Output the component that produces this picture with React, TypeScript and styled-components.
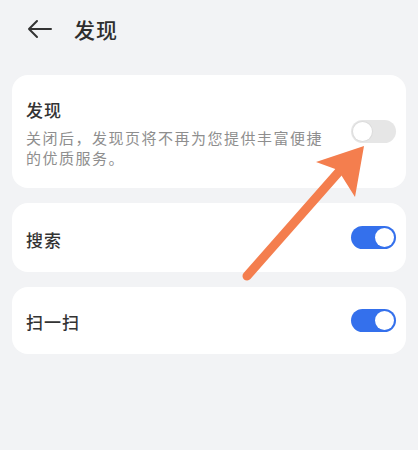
import React from 'react';
import styled, { createGlobalStyle } from 'styled-components';

const GlobalStyle = createGlobalStyle`
  html, body {
    margin: 0;
    padding: 0;
    background: #f2f3f5;
  }
  body {
    font-family: 'Noto Sans CJK SC', 'Noto Sans', sans-serif;
  }
`;

const Page = styled.div`
  position: relative;
  width: 418px;
  height: 450px;
  overflow: hidden;
  background: #f2f3f5;
`;

const Header = styled.div`
  display: flex;
  align-items: center;
  height: 58px;
  padding-left: 27px;
  box-sizing: border-box;
`;

const BackButton = styled.div`
  display: flex;
  align-items: center;
  width: 26px;
  height: 26px;
  margin-right: 21px;
`;

const PageTitle = styled.div`
  font-size: 21px;
  font-weight: 500;
  color: #2e2e2e;
  letter-spacing: 1px;
`;

const List = styled.div`
  display: flex;
  flex-direction: column;
  gap: 15px;
  padding: 17px 12px 0;
`;

const Card = styled.div<{ $h?: number }>`
  display: flex;
  align-items: center;
  gap: 19px;
  background: #ffffff;
  border-radius: 16px;
  box-sizing: border-box;
  height: ${(p) => p.$h}px;
  padding: 0 10px 0 14px;
`;

const TextBlock = styled.div`
  flex: 1;
  display: flex;
  flex-direction: column;
  gap: 6px;
`;

const ItemTitle = styled.div<{ $offset?: number }>`
  font-size: 17px;
  line-height: 24px;
  font-weight: 500;
  color: #333333;
  letter-spacing: 1px;
  margin-top: ${(p) => p.$offset || 0}px;
`;

const ItemDesc = styled.div`
  font-size: 15px;
  line-height: 20px;
  color: #8e8e8e;
  letter-spacing: 1.5px;
`;

const Track = styled.div<{ $on?: boolean }>`
  position: relative;
  flex: 0 0 auto;
  width: 45px;
  height: 23px;
  border-radius: 12px;
  background: ${(p) => (p.$on ? '#3470ec' : '#e6e6e6')};
`;

const Knob = styled.div<{ $on?: boolean }>`
  position: absolute;
  top: 2px;
  left: ${(p) => (p.$on ? '24px' : '2px')};
  width: 19px;
  height: 19px;
  border-radius: 50%;
  background: #ffffff;
  box-shadow: ${(p) => (p.$on ? 'none' : '0 0 0 1px #dcdcdc')};
`;

const Overlay = styled.svg`
  position: absolute;
  left: 0;
  top: 0;
  pointer-events: none;
`;

const Switch = ({ on }: { on?: boolean }) => (
  <Track $on={on}>
    <Knob $on={on} />
  </Track>
);

export default function App() {
  return (
    <>
      <GlobalStyle />
      <Page>
        <Header>
          <BackButton>
            <svg width="26" height="26" viewBox="0 0 26 26" fill="none">
              <path
                d="M2 13 H24 M10 5 L2 13 L10 21"
                stroke="#333"
                strokeWidth="2"
                strokeLinecap="round"
                strokeLinejoin="round"
              />
            </svg>
          </BackButton>
          <PageTitle>发现</PageTitle>
        </Header>
        <List>
          <Card $h={113}>
            <TextBlock>
              <ItemTitle $offset={2}>发现</ItemTitle>
              <ItemDesc>关闭后，发现页将不再为您提供丰富便捷的优质服务。</ItemDesc>
            </TextBlock>
            <Switch />
          </Card>
          <Card $h={69}>
            <TextBlock>
              <ItemTitle $offset={4}>搜索</ItemTitle>
            </TextBlock>
            <Switch on />
          </Card>
          <Card $h={67}>
            <TextBlock>
              <ItemTitle $offset={3}>扫一扫</ItemTitle>
            </TextBlock>
            <Switch on />
          </Card>
        </List>
        <Overlay width="418" height="450" viewBox="0 0 418 450">
          <line
            x1="247"
            y1="276"
            x2="344"
            y2="166"
            stroke="#f47e4e"
            strokeWidth="9"
            strokeLinecap="round"
          />
          <polygon points="364,146 316,162 338,170 355,197" fill="#f47e4e" />
        </Overlay>
      </Page>
    </>
  );
}
